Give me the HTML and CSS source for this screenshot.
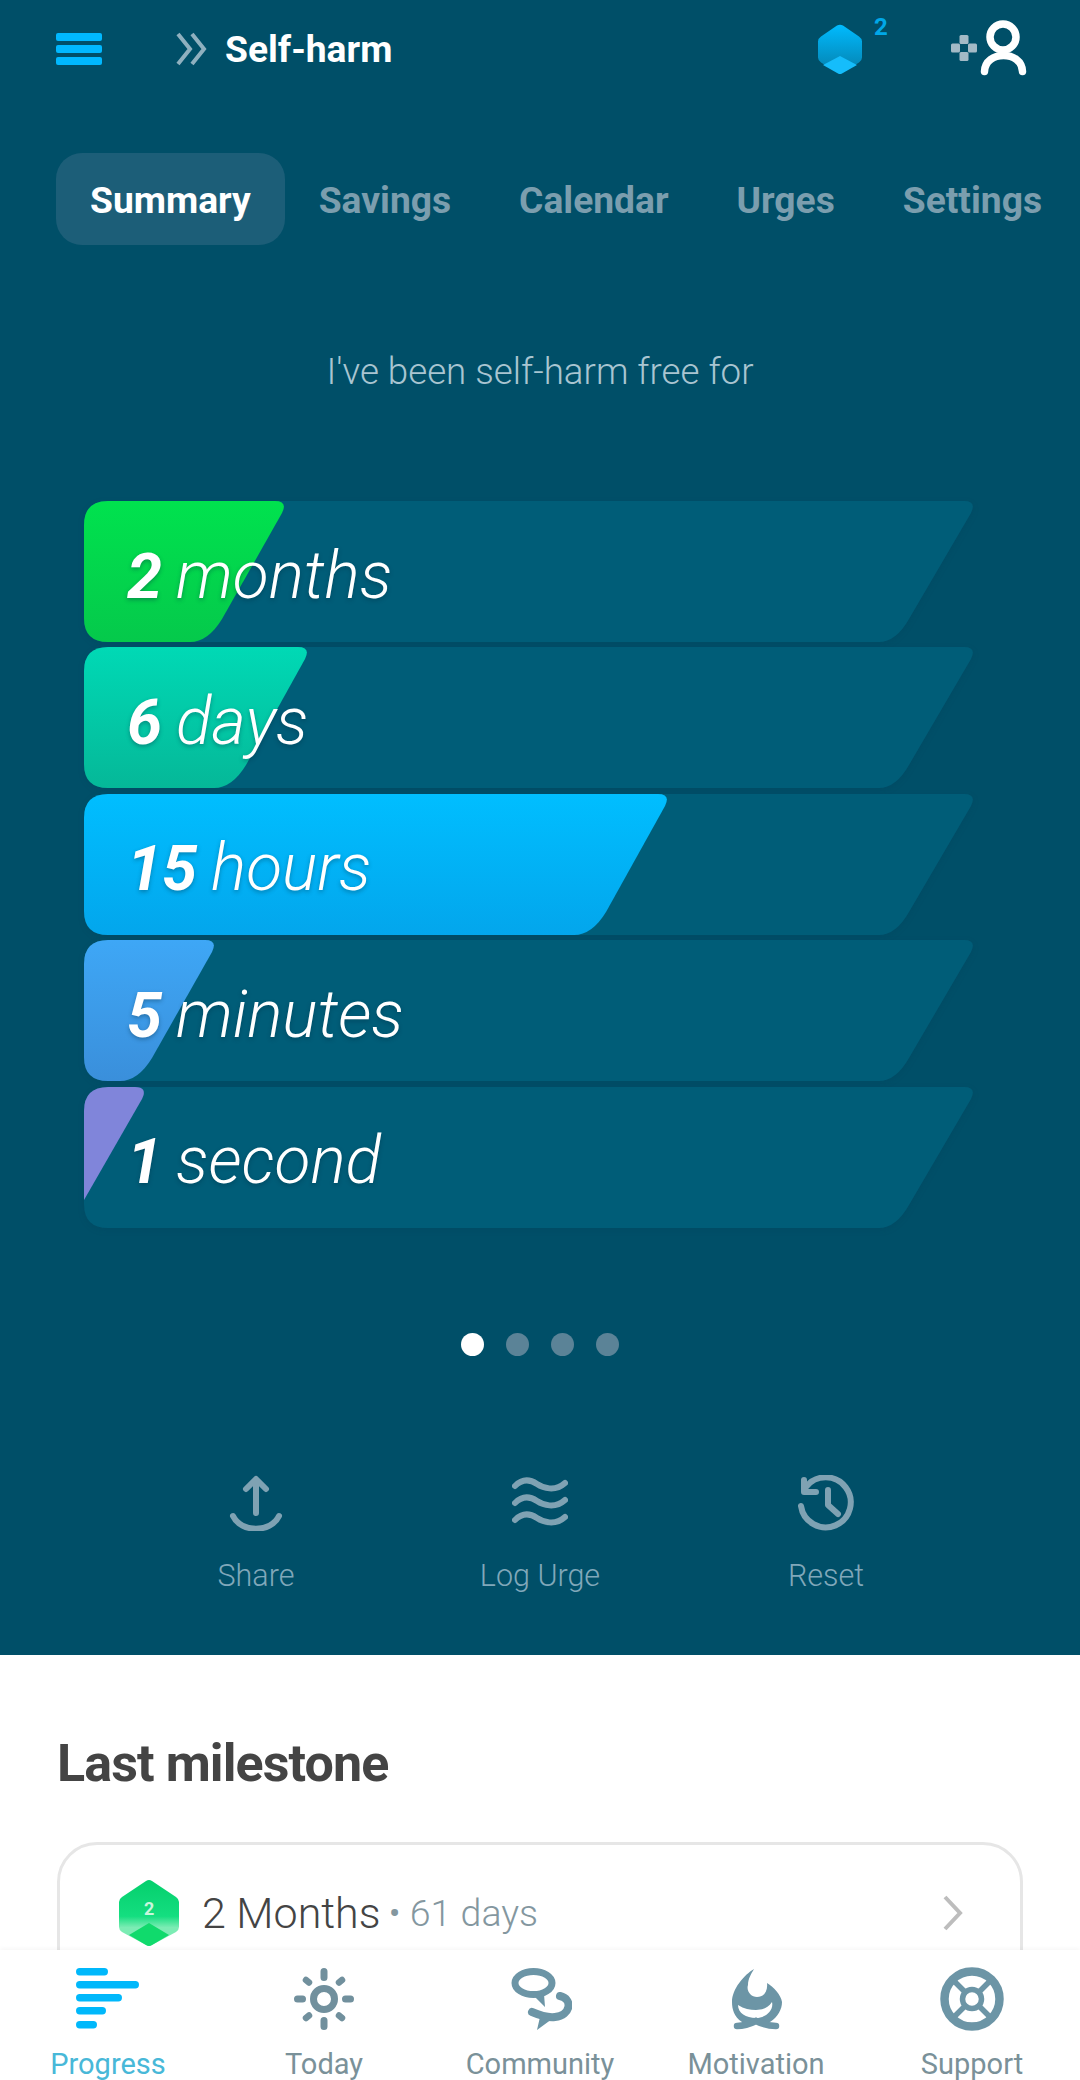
FILE: index.html
```html
<!DOCTYPE html>
<html lang="en">
<head>
  <title>Self-harm</title>
  <meta charset="UTF-8">
  <meta name="viewport" content="width=device-width, initial-scale=1">
  <link rel="stylesheet" href="styles.css">
</head>
<body>

  <div class="scroller">

    <section class="hero">

      <header class="topbar">
        <svg class="menu-icon" viewBox="0 0 46 32" width="46" height="32">
          <rect x="0" y="0" width="46" height="8" rx="2" />
          <rect x="0" y="12" width="46" height="8" rx="2" />
          <rect x="0" y="24" width="46" height="8" rx="2" />
        </svg>
        <svg class="crumb-icon" viewBox="0 0 33 34" width="33" height="34">
          <path d="M3 2l12 15L3 32M17 2l12 15-12 15" />
        </svg>
        <h1 class="page-title">Self-harm</h1>
        <div class="gem">
          <svg viewBox="0 0 44 50" width="44" height="50">
            <defs>
              <linearGradient id="gemFill" x1="0" y1="0" x2="0" y2="1">
                <stop offset="0" stop-color="#00bbff" />
                <stop offset="1" stop-color="#0580ac" />
              </linearGradient>
            </defs>
            <path d="M19 1.500q3-1.600 6 0l16 11q3 2 3 5v16q0 3-3 5l-16 10q-3 1.500-6 0L3 38.500q-3-2-3-5v-16q0-3 3-5z" fill="url(#gemFill)" />
            <path d="M22 32l17 9-15 8.500q-2 1-4 0L5 41z" fill="#15bdfb" />
          </svg>
          <span class="gem-count">2</span>
        </div>
        <svg class="user-icon" viewBox="0 0 78 58" width="78" height="58">
          <g fill="#a3bac6">
            <rect x="9.500" y="15" width="9" height="9" rx="1.500" />
            <rect x="1" y="23.500" width="9" height="9" rx="1.500" />
            <rect x="18" y="23.500" width="9" height="9" rx="1.500" />
            <rect x="9.500" y="32" width="9" height="9" rx="1.500" />
          </g>
          <circle cx="53" cy="17" r="13" />
          <path d="M34.500 51.500C35 30 72 30 72.500 51.500" />
        </svg>
      </header>

      <nav class="tabs">
        <span class="tab tab-active">Summary</span>
        <span class="tab">Savings</span>
        <span class="tab">Calendar</span>
        <span class="tab">Urges</span>
        <span class="tab">Settings</span>
      </nav>

      <p class="free-for">I've been self-harm free for</p>

      <div class="bars">
        <div class="bar">
          <svg class="bar-shape" viewBox="0 0 890 141" width="890" height="141">
            <defs>
              <linearGradient id="greenFill" x1="0" y1="0" x2="0" y2="1"><stop offset="0" stop-color="#00e24e" /><stop offset="1" stop-color="#05c94b" /></linearGradient>
              <linearGradient id="tealFill" x1="0" y1="0" x2="0" y2="1"><stop offset="0" stop-color="#00d9b5" /><stop offset="1" stop-color="#05b898" /></linearGradient>
              <linearGradient id="blueFill" x1="0" y1="0" x2="0" y2="1"><stop offset="0" stop-color="#00beff" /><stop offset="1" stop-color="#03a6ec" /></linearGradient>
              <linearGradient id="skyFill" x1="0" y1="0" x2="0" y2="1"><stop offset="0" stop-color="#3ea7f6" /><stop offset="1" stop-color="#3a8fdb" /></linearGradient>
            </defs>
            <path class="track" d="M0 24Q0 0 24 0H880Q893 0 887 12L825 118Q812 141 795 141H24Q0 141 0 117Z" />
            <path d="M0 24Q0 0 24 0H191Q204 0 198 12L138 118Q124 141 106 141H24Q0 141 0 117Z" fill="url(#greenFill)" />
          </svg>
          <span class="bar-label"><b>2</b> months</span>
        </div>
        <div class="bar">
          <svg class="bar-shape" viewBox="0 0 890 141" width="890" height="141">
            <path class="track" d="M0 24Q0 0 24 0H880Q893 0 887 12L825 118Q812 141 795 141H24Q0 141 0 117Z" />
            <path d="M0 24Q0 0 24 0H214Q227 0 221 12L162 118Q148 141 130 141H24Q0 141 0 117Z" fill="url(#tealFill)" />
          </svg>
          <span class="bar-label"><b>6</b> days</span>
        </div>
        <div class="bar">
          <svg class="bar-shape" viewBox="0 0 890 141" width="890" height="141">
            <path class="track" d="M0 24Q0 0 24 0H880Q893 0 887 12L825 118Q812 141 795 141H24Q0 141 0 117Z" />
            <path d="M0 24Q0 0 24 0H574Q587 0 581 12L522 118Q508 141 490 141H24Q0 141 0 117Z" fill="url(#blueFill)" />
          </svg>
          <span class="bar-label"><b>15</b> hours</span>
        </div>
        <div class="bar">
          <svg class="bar-shape" viewBox="0 0 890 141" width="890" height="141">
            <path class="track" d="M0 24Q0 0 24 0H880Q893 0 887 12L825 118Q812 141 795 141H24Q0 141 0 117Z" />
            <path d="M0 24Q0 0 24 0H121Q134 0 128 12L68 118Q54 141 36 141H24Q0 141 0 117Z" fill="url(#skyFill)" />
          </svg>
          <span class="bar-label"><b>5</b> minutes</span>
        </div>
        <div class="bar">
          <svg class="bar-shape" viewBox="0 0 890 141" width="890" height="141">
            <path class="track" d="M0 24Q0 0 24 0H880Q893 0 887 12L825 118Q812 141 795 141H24Q0 141 0 117Z" />
            <path d="M0 24Q0 0 24 0H51Q64 0 58 12L0 113Z" fill="#8085da" />
          </svg>
          <span class="bar-label"><b>1</b> second</span>
        </div>
      </div>

      <div class="dots">
        <span class="dot dot-active"></span>
        <span class="dot"></span>
        <span class="dot"></span>
        <span class="dot"></span>
      </div>

      <div class="actions">
        <div class="action">
          <svg class="action-icon" viewBox="0 0 56 56" width="56" height="56">
            <path d="M28 38V5M18 14L28 4l10 10M5 41c8 17 38 17 46 0" />
          </svg>
          <span>Share</span>
        </div>
        <div class="action">
          <svg class="action-icon" viewBox="0 0 56 56" width="56" height="56">
            <path d="M3 11c8-8 16-6 22-2s18 8 28-1M3 28c8-8 16-6 22-2s18 8 28-1M3 45c8-8 16-6 22-2s18 8 28-1" />
          </svg>
          <span>Log Urge</span>
        </div>
        <div class="action">
          <svg class="action-icon" viewBox="0 0 56 56" width="56" height="56">
            <path d="M8 12A25 25 0 1 1 3 31M6 5v12h12M30 15v15l10 9" />
          </svg>
          <span>Reset</span>
        </div>
      </div>

    </section>

    <section class="milestone">
      <h2 class="section-title">Last milestone</h2>
      <div class="card">
        <svg class="badge" viewBox="0 0 60 66" width="60" height="66">
          <defs>
            <linearGradient id="badgeFill" x1="0" y1="0" x2="0" y2="1">
              <stop offset="0" stop-color="#04cf6c" />
              <stop offset="0.55" stop-color="#14de80" />
              <stop offset="0.72" stop-color="#7cecb4" />
            </linearGradient>
          </defs>
          <path d="M27 1q3-2 6 0l24 16q3 2 3 5v25q0 3-3 5L33 65q-3 2-6 0L3 52q-3-2-3-5V22q0-3 3-5z" fill="url(#badgeFill)" />
          <path d="M30 43l20 12-17 10q-3 2-6 0L10 55z" fill="#10da6c" />
        </svg>
        <span class="badge-count">2</span>
        <span class="milestone-name">2 Months</span>
        <span class="milestone-days">• 61 days</span>
        <svg class="card-arrow" viewBox="0 0 22 36" width="22" height="36">
          <path d="M3 2l15 16L3 34" />
        </svg>
      </div>
    </section>

  </div>

  <nav class="bottom-nav">
    <div class="nav-item nav-active">
      <svg viewBox="0 0 64 64" width="64" height="64">
        <g fill="#00b8fb">
          <rect x="0" y="1" width="32" height="7.500" rx="3.700" />
          <rect x="0" y="14" width="63" height="7.500" rx="3.700" />
          <rect x="0" y="27" width="46" height="7.500" rx="3.700" />
          <rect x="0" y="40" width="30" height="7.500" rx="3.700" />
          <rect x="0" y="54" width="21" height="7.500" rx="3.700" />
        </g>
      </svg>
      <span>Progress</span>
    </div>
    <div class="nav-item">
      <svg viewBox="0 0 64 64" width="64" height="64">
        <circle cx="32" cy="32" r="10.500" fill="none" stroke="#71909d" stroke-width="7" />
        <path d="M32 4.500v6M32 53.500v6M5.500 32h5M53.500 32h5" fill="none" stroke="#71909d" stroke-width="7" stroke-linecap="round" />
        <path d="M14 13l3 2.500M50 13l-3 2.500M14 51l3-2.500M50 51l-3-2.500" fill="none" stroke="#71909d" stroke-width="6.500" stroke-linecap="round" />
      </svg>
      <span>Today</span>
    </div>
    <div class="nav-item">
      <svg viewBox="0 0 64 64" width="64" height="64">
        <g transform="translate(3 0)" fill="none" stroke="#6c95a6">
          <ellipse cx="22.500" cy="16" rx="18.500" ry="11.500" stroke-width="7" />
          <path d="M49 29C62 32 60 48 44 50 36 51 28 48 21 45" stroke-width="8" stroke-linecap="round" />
          <path d="M24 30l9-3 1 13zM29 50l12 2-15 11z" fill="#6c95a6" stroke="none" />
        </g>
      </svg>
      <span>Community</span>
    </div>
    <div class="nav-item">
      <svg viewBox="0 0 64 64" width="64" height="64">
        <path d="M30 2C20 8 8 22 8 35 8 42 10 50 18 55H46C54 50 58 42 58 35 57 28 50 20 43 16 44 24 40 30 33 30 27 30 22 24 24 18 24 12 27 7 30 2ZM14 38C20 42 26 43 32 43 38 43 44 41 48 35 50 43 42 51 32 51 22 51 14 46 14 38Z" fill="#6c95a6" fill-rule="evenodd" />
        <path d="M13 59C20 59 26 57 32 54 38 57 44 59 52 59" fill="none" stroke="#6c95a6" stroke-width="6.500" stroke-linecap="round" />
      </svg>
      <span>Motivation</span>
    </div>
    <div class="nav-item">
      <svg viewBox="0 0 64 64" width="64" height="64">
        <g fill="none" stroke="#6c95a6">
          <circle cx="32" cy="32" r="27.500" stroke-width="8.500" />
          <circle cx="32" cy="32" r="9.500" stroke-width="5.500" />
          <path d="M13 13l12 12M51 13L39 25M13 51l12-12M51 51L39 39" stroke-width="5.500" />
        </g>
      </svg>
      <span>Support</span>
    </div>
  </nav>

</body>
</html>
```

FILE: styles.css
```css
* {
  margin: 0;
  box-sizing: border-box;
}

html, body {
  height: 2080px;
}

body {
  font-family: 'Roboto', sans-serif;
  background-color: white;
  display: flex;
  flex-direction: column;
  overflow: hidden;
}

.scroller {
  flex: 1;
  min-height: 0;
  overflow: hidden;
}

/* dark top part */
.hero {
  height: 1655px;
  background-color: #004f68;
  padding-top: 18px;
}

.topbar {
  display: flex;
  align-items: center;
  height: 62px;
  padding-left: 56px;
}

.menu-icon {
  fill: #00b8ff;
  margin-right: 73px;
}

.crumb-icon {
  fill: none;
  stroke: #8fb0bf;
  stroke-width: 4px;
  margin-right: 17px;
}

.page-title {
  font-size: 37.2px;
  font-weight: 700;
  color: white;
  flex: 1;
}

.gem {
  display: flex;
  align-items: flex-start;
  width: 132px;
}

.gem-count {
  font-size: 24px;
  font-weight: 700;
  color: #00a8e8;
  margin: -11px 0 0 12px;
}

.user-icon {
  fill: none;
  stroke: white;
  stroke-width: 7.5px;
  stroke-linecap: round;
  margin-right: 52px;
}

.user-icon g {
  stroke: none;
}

.tabs {
  display: flex;
  padding-left: 56px;
  margin-top: 73px;
}

.tab {
  height: 92px;
  line-height: 94px;
  padding: 0 34px;
  border-radius: 26px;
  font-size: 37.2px;
  font-weight: 700;
  color: #7b9eae;
  white-space: nowrap;
}

.tab-active {
  background-color: #1c5e78;
  color: white;
}

.free-for {
  text-align: center;
  margin-top: 105px;
  font-size: 36.7px;
  font-weight: 300;
  color: #a9c5d1;
}

.bars {
  display: flex;
  flex-direction: column;
  gap: 5.4px;
  margin: 108px 0 0 84px;
}

.bar {
  position: relative;
  height: 141px;
  width: 890px;
  display: flex;
  align-items: center;
  padding: 7px 0 0 43px;
}

.bar-shape {
  position: absolute;
  left: 0;
  top: 0;
  overflow: visible;
}

.track {
  fill: #005d78;
  filter: drop-shadow(0 2px 3px rgba(0, 50, 70, 0.12));
}

.bar-label {
  position: relative;
  font-size: 66px;
  font-weight: 300;
  font-style: italic;
  word-spacing: -2px;
  color: white;
  text-shadow: 0 2px 4px rgba(0, 40, 60, 0.35);
  white-space: nowrap;
}

.bar-label b {
  font-size: 63px;
  font-weight: 700;
}

.dots {
  display: flex;
  justify-content: center;
  gap: 22px;
  margin-top: 105px;
}

.dot {
  width: 23px;
  height: 23px;
  border-radius: 50%;
  background-color: #5b8397;
}

.dot-active {
  background-color: white;
}

.actions {
  display: grid;
  grid-template-columns: 284px 284px 288px;
  padding-left: 114px;
  margin-top: 119px;
}

.action {
  display: flex;
  flex-direction: column;
  align-items: center;
  gap: 27px;
  font-size: 30.5px;
  font-weight: 300;
  color: #80a8ba;
}

.action-icon {
  fill: none;
  stroke: #7fa2b3;
  stroke-width: 6px;
  stroke-linecap: round;
  stroke-linejoin: round;
}

/* white part under the hero */
.milestone {
  padding: 78px 57px 0 57px;
}

.section-title {
  font-size: 52px;
  font-weight: 700;
  color: #444;
  letter-spacing: -0.9px;
}

.card {
  position: relative;
  display: flex;
  align-items: center;
  height: 200px;
  margin-top: 48px;
  padding: 0 56px 0 59px;
  border: 3px solid #e6e6e6;
  border-radius: 40px;
}

.badge {
  align-self: flex-start;
  margin-top: 35px;
  margin-right: 23px;
}

.badge-count {
  position: absolute;
  left: 84px;
  top: 53px;
  font-size: 18px;
  font-weight: 700;
  color: #c9f5dd;
}

.milestone-name {
  align-self: flex-start;
  margin-top: 43px;
  font-size: 43px;
  font-weight: 300;
  color: #444;
}

.milestone-days {
  align-self: flex-start;
  margin: 46px 0 0 8px;
  font-size: 37.5px;
  font-weight: 300;
  color: #84979f;
  flex: 1;
}

.card-arrow {
  align-self: flex-start;
  margin-top: 50px;
  fill: none;
  stroke: #bdbdbd;
  stroke-width: 4px;
}

.bottom-nav {
  display: flex;
  height: 130px;
  background-color: white;
  box-shadow: 0 -2px 4px rgba(0, 0, 0, 0.03);
  position: relative;
}

.nav-item {
  flex: 1;
  display: flex;
  flex-direction: column;
  align-items: center;
  padding-top: 17px;
  gap: 19px;
  font-size: 29px;
  line-height: 29px;
  color: #7a9199;
  white-space: nowrap;
}

.nav-active {
  color: #48b8d8;
}
```
